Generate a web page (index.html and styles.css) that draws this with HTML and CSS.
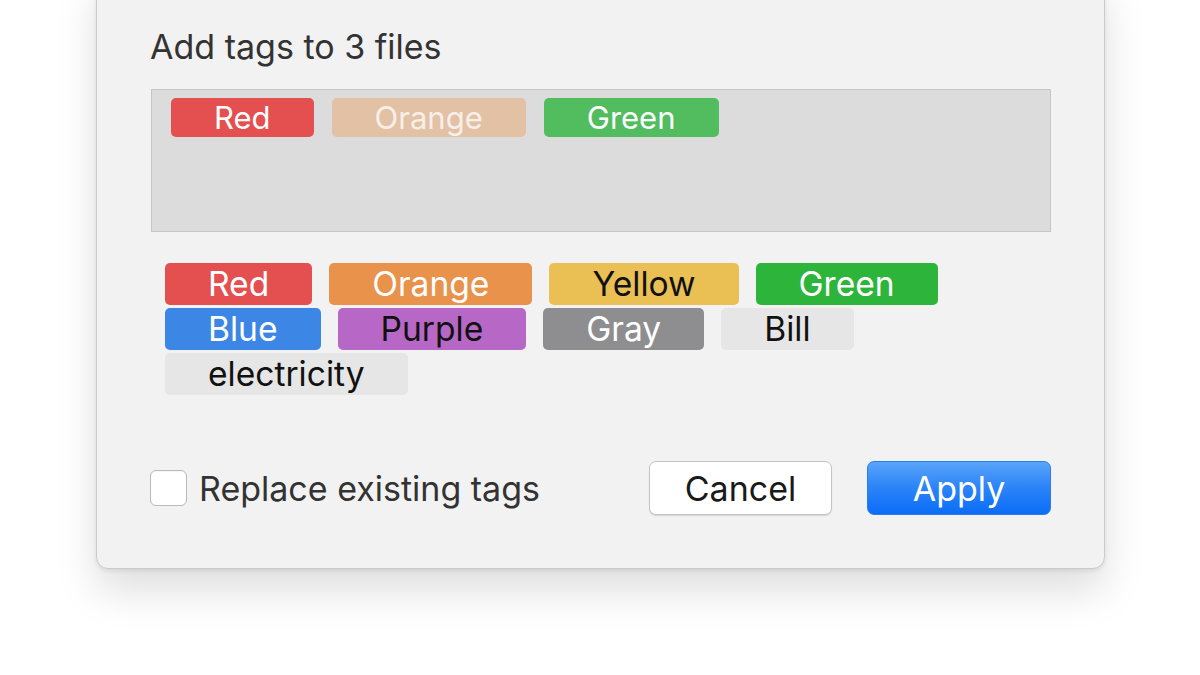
FILE: index.html
```html
<!DOCTYPE html>
<html lang="en">
<head>
<meta charset="utf-8">
<title>Add tags</title>
<link rel="stylesheet" href="styles.css">
</head>
<body>
<div class="stage">
  <div class="dialog">
    <h1 class="title">Add tags to 3 files</h1>
    <div class="field">
      <span class="chip sm red">Red</span>
      <span class="chip sm orange-faded">Orange</span>
      <span class="chip sm green-soft">Green</span>
    </div>
    <div class="tags">
      <span class="chip red">Red</span>
      <span class="chip orange">Orange</span>
      <span class="chip yellow">Yellow</span>
      <span class="chip green">Green</span>
      <span class="chip blue">Blue</span>
      <span class="chip purple">Purple</span>
      <span class="chip gray">Gray</span>
      <span class="chip plain">Bill</span>
      <span class="chip plain">electricity</span>
    </div>
    <div class="footer">
      <label class="check">
        <span class="box"></span>
        <span class="check-label">Replace existing tags</span>
      </label>
      <div class="buttons">
        <button class="btn cancel">Cancel</button>
        <button class="btn apply">Apply</button>
      </div>
    </div>
  </div>
</div>
</body>
</html>
```

FILE: styles.css
```css
* { box-sizing: border-box; }
html, body {
  margin: 0;
  padding: 0;
  background: #ffffff;
  height: 100%;
  overflow: hidden;
}
body {
  font-family: Inter, "Noto Sans", "Liberation Sans", sans-serif;
  color: #2e2e2e;
}
.stage {
  padding-left: 96px;
}
.dialog {
  width: 1009px;
  height: 599px;
  margin-top: -30px;
  background: #f2f2f2;
  border: 1px solid #cbcbcb;
  border-radius: 12px;
  box-shadow: 0 22px 40px rgba(0, 0, 0, 0.13), 0 2px 4px rgba(0, 0, 0, 0.08);
  padding: 57px 53px 0 53px;
}
.title {
  margin: 0;
  font-size: 34px;
  line-height: 38px;
  font-weight: 400;
  color: #333333;
}
.field {
  margin-top: 23px;
  margin-left: 1px;
  height: 143px;
  width: 900px;
  background: #dcdcdc;
  border: 1px solid #c6c6c6;
  padding: 8px 19px;
  display: flex;
  gap: 18px;
  align-items: flex-start;
}
.chip {
  display: inline-flex;
  align-items: center;
  justify-content: center;
  height: 42px;
  padding: 0 43px;
  border-radius: 5px;
  font-size: 33.6px;
  color: #ffffff;
  line-height: 1;
  white-space: nowrap;
}
.chip.sm {
  height: 39px;
  font-size: 31px;
}
.red { background: #e44f50; }
.orange-faded { background: #e3c1a5; color: #f7efe8; }
.green-soft { background: #52bd5f; }
.orange { background: #e8924b; }
.yellow { background: #eabf54; color: #111111; }
.green { background: #2db53b; }
.blue { background: #3c86e6; }
.purple { background: #b768c7; color: #111111; }
.gray { background: #8e8e90; }
.plain { background: #e6e6e6; color: #111111; }
.tags {
  margin-top: 31px;
  margin-left: 15px;
  width: 800px;
  display: flex;
  flex-wrap: wrap;
  column-gap: 17px;
  row-gap: 3px;
}
.footer {
  margin-top: 66px;
  display: flex;
  align-items: center;
  justify-content: space-between;
  width: 901px;
}
.check {
  display: flex;
  align-items: center;
  gap: 12px;
}
.box {
  width: 37px;
  height: 36px;
  background: #ffffff;
  border: 1px solid #b9b9b9;
  border-radius: 6px;
  box-shadow: inset 0 1px 1px rgba(0,0,0,0.04);
}
.check-label {
  font-size: 34px;
  color: #333333;
}
.buttons {
  display: flex;
  gap: 35px;
}
.btn {
  font-family: inherit;
  height: 54px;
  width: 183px;
  border-radius: 7px;
  font-size: 34px;
  padding: 0;
}
.cancel {
  background: #ffffff;
  border: 1px solid #c4c4c4;
  color: #1a1a1a;
  box-shadow: 0 1px 1px rgba(0,0,0,0.12);
}
.apply {
  width: 184px;
  background: linear-gradient(to bottom, #5aa4fa 0%, #2a83f8 50%, #0b6df7 100%);
  border: 1px solid #2a7ee8;
  color: #ffffff;
}
```
